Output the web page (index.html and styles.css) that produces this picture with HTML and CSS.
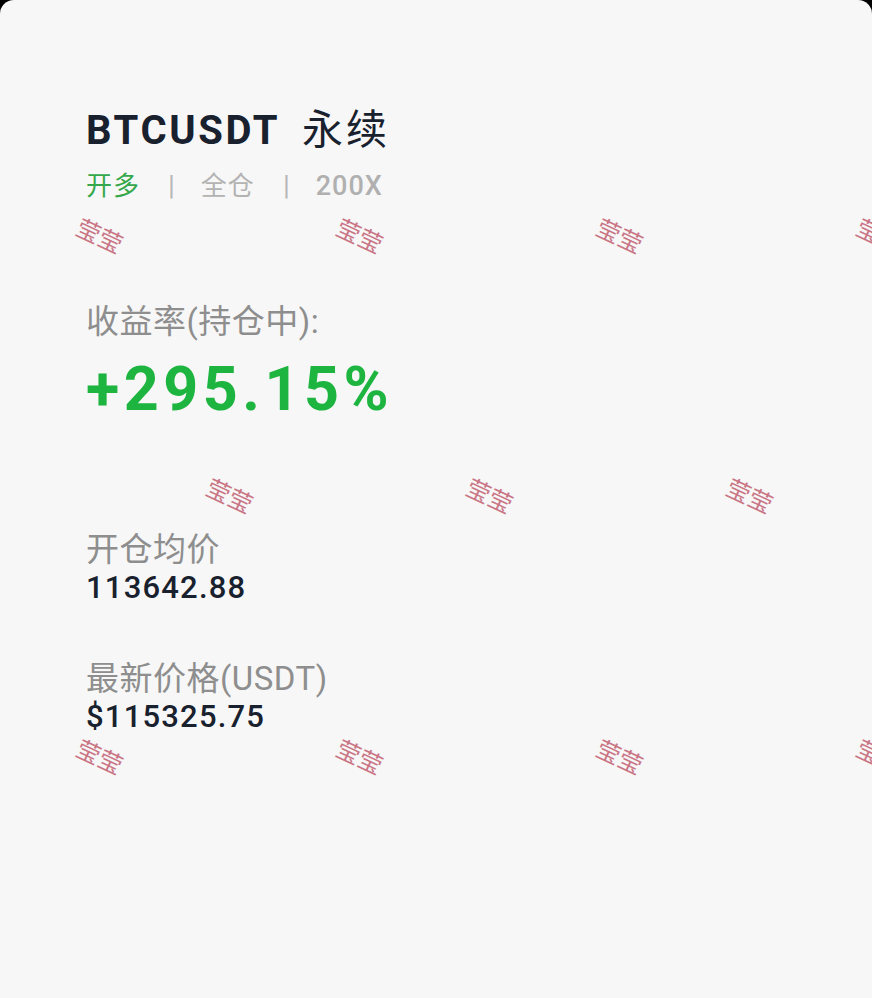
FILE: index.html
```html
<!DOCTYPE html>
<html lang="zh-CN">
<head>
<meta charset="utf-8">
<title>BTCUSDT 永续</title>
<link rel="stylesheet" href="styles.css">
</head>
<body>
<div class="card">
  <div class="content">
    <div class="title"><span class="sym">BTCUSDT</span><span class="perp">永续</span></div>
    <div class="tags">
      <span class="long">开多</span>
      <span class="sep">|</span>
      <span class="muted">全仓</span>
      <span class="sep">|</span>
      <span class="lev">200X</span>
    </div>
    <div class="label roi-label">收益率(持仓中):</div>
    <div class="roi">+295.15%</div>
    <div class="label entry-label">开仓均价</div>
    <div class="value">113642.88</div>
    <div class="label last-label">最新价格(USDT)</div>
    <div class="value">$115325.75</div>
  </div>
  <div class="marks" aria-hidden="true">
    <span class="wm" style="left:76px;top:220px">莹莹</span>
    <span class="wm" style="left:336px;top:220px">莹莹</span>
    <span class="wm" style="left:596px;top:220px">莹莹</span>
    <span class="wm" style="left:856px;top:220px">莹莹</span>
    <span class="wm" style="left:206px;top:480px">莹莹</span>
    <span class="wm" style="left:466px;top:480px">莹莹</span>
    <span class="wm" style="left:726px;top:480px">莹莹</span>
    <span class="wm" style="left:76px;top:741px">莹莹</span>
    <span class="wm" style="left:336px;top:741px">莹莹</span>
    <span class="wm" style="left:596px;top:741px">莹莹</span>
    <span class="wm" style="left:856px;top:741px">莹莹</span>
  </div>
</div>
</body>
</html>
```

FILE: styles.css
```css
html, body {
  margin: 0;
  padding: 0;
  background: #000;
}
body {
  font-family: Roboto, "Noto Sans CJK SC", sans-serif;
}
.card {
  position: relative;
  width: 872px;
  height: 998px;
  background: #f7f7f7;
  border-radius: 14px 14px 0 0;
  overflow: hidden;
}
.content {
  padding: 102px 0 0 86px;
}
.title {
  font-size: 40px;
  line-height: 48px;
  color: #18212d;
  display: flex;
  align-items: baseline;
  gap: 22px;
}
.sym {
  font-weight: 700;
  letter-spacing: 2.6px;
}
.perp {
  font-family: "Noto Sans CJK SC", sans-serif;
  font-weight: 400;
  font-size: 41px;
  letter-spacing: 3px;
}
.tags {
  margin-top: 12px;
  display: flex;
  align-items: baseline;
  font-size: 26px;
  line-height: 34px;
  color: #b3b3b3;
}
.long {
  color: #34a84a;
  font-family: "Noto Sans CJK SC", sans-serif;
  letter-spacing: 1px;
}
.sep {
  margin: 0 26px 0 28px;
  font-size: 28px;
  color: #b8b8b8;
}
.muted {
  font-family: "Noto Sans CJK SC", sans-serif;
  letter-spacing: 1px;
}
.lev {
  font-weight: 500;
  font-size: 27px;
  letter-spacing: 1px;
  color: #b0b0b0;
}
.label {
  font-size: 33px;
  line-height: 40px;
  color: #8e8e8e;
  letter-spacing: 0.5px;
}
.roi-label {
  margin-top: 99px;
}
.roi {
  font-size: 61px;
  line-height: 70px;
  font-weight: 700;
  letter-spacing: 4.5px;
  color: #1db440;
  margin-top: 12px;
}
.entry-label {
  margin-top: 106px;
}
.value {
  font-size: 31px;
  line-height: 36px;
  font-weight: 500;
  letter-spacing: 1.2px;
  color: #18212d;
}
.last-label {
  margin-top: 53px;
}
.marks {
  position: absolute;
  inset: 0;
  pointer-events: none;
}
.wm {
  position: absolute;
  font-family: "Noto Sans CJK SC", sans-serif;
  font-size: 24px;
  line-height: 30px;
  color: #c97585;
  transform: rotate(25deg);
  transform-origin: center;
  white-space: nowrap;
}
```
